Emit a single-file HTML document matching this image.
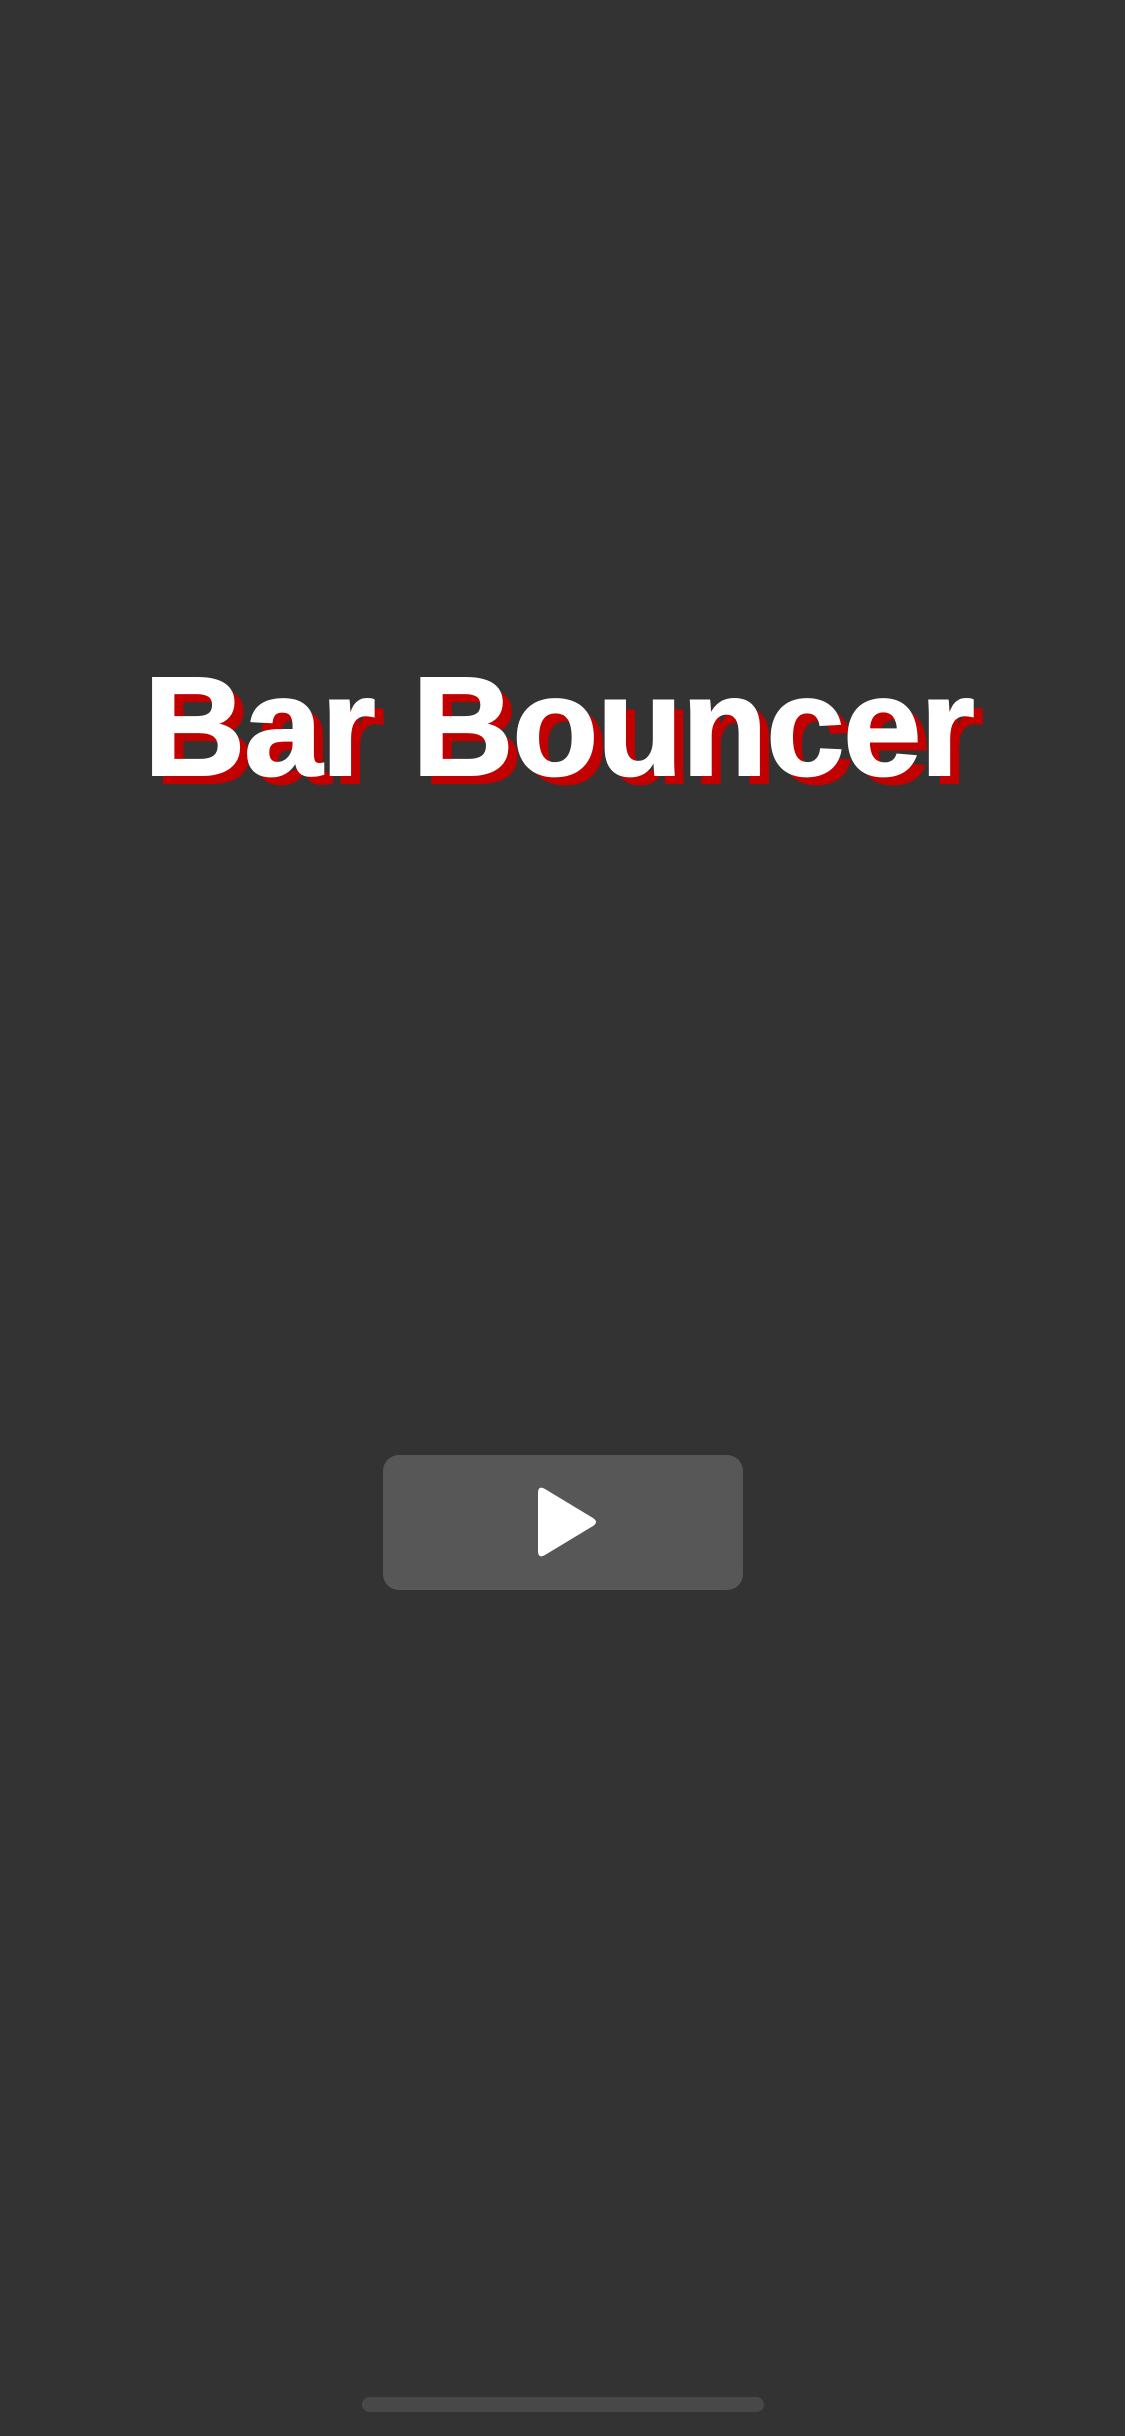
<!DOCTYPE html>
<html><head><meta charset="utf-8"><style>
html,body{margin:0;padding:0;background:#333333;width:1125px;height:2436px;overflow:hidden;position:relative}
.t{position:absolute;left:0;width:1125px;top:656px;text-align:center;font-family:"Liberation Sans",Arial,sans-serif;font-weight:bold;font-size:141px;line-height:141px;color:#fff;letter-spacing:-1.5px;-webkit-text-stroke:2px #fff;text-shadow:10px 9px 0 #c30000;white-space:nowrap}
.t span{display:inline-block;transform:translateX(-4px)}
.btn{position:absolute;left:383px;top:1455px;width:360px;height:135px;background:#575757;border-radius:16px}
.home{position:absolute;left:362px;top:2397px;width:402px;height:15px;background:#484848;border-radius:8px}
</style></head><body>
<div class="t"><span>Bar Bouncer</span></div>
<div class="btn"><svg width="360" height="135" viewBox="0 0 360 135" style="position:absolute;left:0;top:0">
<path d="M155 38 Q155 30 162 34 L210 63 Q216 67 210 71 L162 100 Q155 104 155 96 Z" fill="#fff"/></svg></div>
<div class="home"></div>
</body></html>
